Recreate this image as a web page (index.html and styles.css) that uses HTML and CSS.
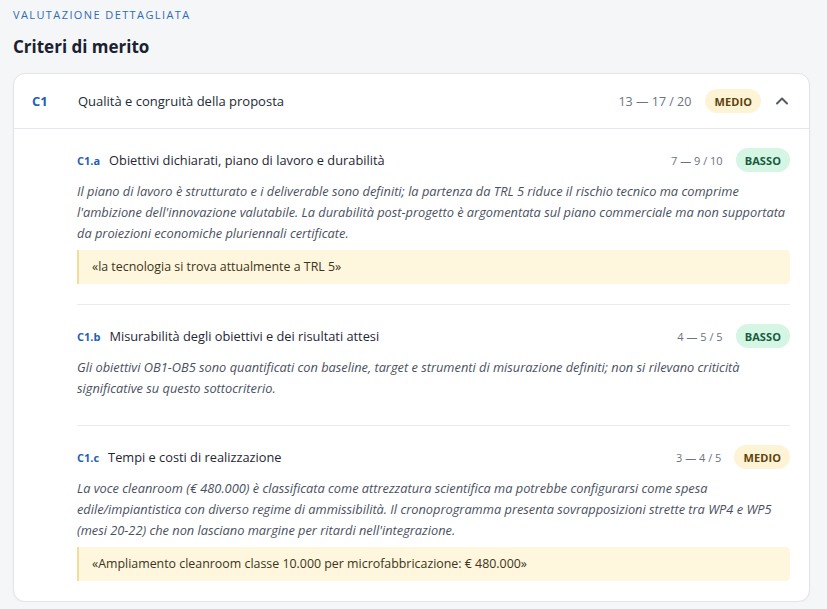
FILE: index.html
```html
<!DOCTYPE html>
<html lang="it">
<head>
<meta charset="utf-8">
<title>Criteri di merito</title>
<link rel="stylesheet" href="styles.css">
</head>
<body>
<main class="page">
  <div class="eyebrow">VALUTAZIONE DETTAGLIATA</div>
  <h2 class="heading">Criteri di merito</h2>

  <section class="card">
    <header class="card-head">
      <span class="code">C1</span>
      <span class="card-title">Qualità e congruità della proposta</span>
      <span class="score">13 — 17 / 20</span>
      <span class="badge medio">MEDIO</span>
      <svg class="chev" width="14" height="14" viewBox="0 0 14 14" aria-hidden="true"><path d="M2 9.5 L7 4.5 L12 9.5" fill="none" stroke="#555b66" stroke-width="2" stroke-linecap="round" stroke-linejoin="round"/></svg>
    </header>

    <div class="card-body">
      <article class="item">
        <div class="item-head">
          <span class="sub-code">C1.a</span>
          <span class="item-title">Obiettivi dichiarati, piano di lavoro e durabilità</span>
          <span class="sub-score">7 — 9 / 10</span>
          <span class="badge basso">BASSO</span>
        </div>
        <p class="desc">Il piano di lavoro è strutturato e i deliverable sono definiti; la partenza da TRL 5 riduce il rischio tecnico ma comprime l'ambizione dell'innovazione valutabile. La durabilità post-progetto è argomentata sul piano commerciale ma non supportata da proiezioni economiche pluriennali certificate.</p>
        <blockquote class="quote">«la tecnologia si trova attualmente a TRL 5»</blockquote>
      </article>

      <article class="item">
        <div class="item-head">
          <span class="sub-code">C1.b</span>
          <span class="item-title">Misurabilità degli obiettivi e dei risultati attesi</span>
          <span class="sub-score">4 — 5 / 5</span>
          <span class="badge basso">BASSO</span>
        </div>
        <p class="desc">Gli obiettivi OB1-OB5 sono quantificati con baseline, target e strumenti di misurazione definiti; non si rilevano criticità significative su questo sottocriterio.</p>
      </article>

      <article class="item">
        <div class="item-head">
          <span class="sub-code">C1.c</span>
          <span class="item-title">Tempi e costi di realizzazione</span>
          <span class="sub-score">3 — 4 / 5</span>
          <span class="badge medio">MEDIO</span>
        </div>
        <p class="desc">La voce cleanroom (€ 480.000) è classificata come attrezzatura scientifica ma potrebbe configurarsi come spesa edile/impiantistica con diverso regime di ammissibilità. Il cronoprogramma presenta sovrapposizioni strette tra WP4 e WP5 (mesi 20-22) che non lasciano margine per ritardi nell'integrazione.</p>
        <blockquote class="quote">«Ampliamento cleanroom classe 10.000 per microfabbricazione: € 480.000»</blockquote>
      </article>
    </div>
  </section>
</main>
</body>
</html>
```

FILE: styles.css
```css
* { box-sizing: border-box; }

html, body {
  margin: 0;
  padding: 0;
  background: #f5f6f8;
}

body {
  font-family: "Open Sans", "Noto Sans", "Liberation Sans", sans-serif;
  color: #1f2633;
}

.page {
  padding: 7px 17px 0 13px;
}

.eyebrow {
  font-size: 11px;
  line-height: 15px;
  letter-spacing: 1.4px;
  color: #2f6cb3;
  font-weight: 500;
}

.heading {
  margin: 14px 0 0;
  font-size: 17px;
  line-height: 22px;
  font-weight: 700;
  color: #1a2130;
}

.card {
  margin-top: 15px;
  background: #ffffff;
  border: 1px solid #e1e4e9;
  border-radius: 12px;
  box-shadow: 0 1px 2px rgba(20, 30, 50, 0.04);
}

.card-head {
  display: flex;
  align-items: center;
  height: 55px;
  padding: 0 20px 0 18px;
  border-bottom: 1px solid #e4e7ec;
}

.code {
  width: 46px;
  font-size: 13px;
  font-weight: 700;
  color: #1f5fb5;
}

.card-title {
  flex: 1;
  font-size: 13px;
  color: #222a36;
}

.score {
  font-size: 12.5px;
  color: #6b7280;
  margin-right: 14px;
}

.badge {
  display: inline-flex;
  align-items: center;
  height: 24px;
  padding: 0 9px;
  border-radius: 12px;
  font-size: 11px;
  font-weight: 700;
  letter-spacing: 0.1px;
}

.medio {
  background: #fdf4d6;
  color: #5e430e;
}

.basso {
  background: #d5f5e5;
  color: #175c3e;
}

.chev {
  margin-left: 14px;
  display: block;
}

.card-body {
  padding: 0 19px 0 63px;
}

.item {
  padding: 19px 0 20px;
  border-bottom: 1px solid #e8eaee;
}

.item:last-child {
  border-bottom: 0;
}

.item-head {
  display: flex;
  align-items: center;
  height: 24px;
}

.sub-code {
  font-size: 11px;
  font-weight: 700;
  color: #1f5fb5;
  margin-right: 9px;
}

.item-title {
  flex: 1;
  font-size: 12.8px;
  font-weight: 500;
  color: #1f2633;
}

.sub-score {
  font-size: 11px;
  color: #6b7280;
  margin-right: 13px;
}

.desc {
  margin: 9px 0 6px;
  font-size: 12.8px;
  line-height: 21px;
  font-style: italic;
  color: #4a5160;
}

.quote {
  margin: 0;
  padding: 8px 13px;
  background: #fef7dd;
  border-left: 2px solid #f2dd9c;
  border-radius: 0 4px 4px 0;
  font-size: 12.4px;
  line-height: 18px;
  color: #3d3320;
}
```
